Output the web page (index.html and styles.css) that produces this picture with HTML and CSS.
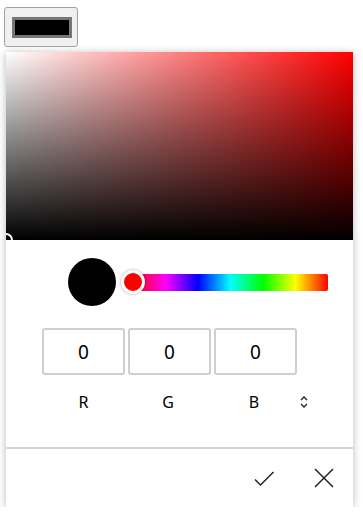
FILE: index.html
```html
<!DOCTYPE html>
<html>
<head>
<meta charset="utf-8">
<link rel="stylesheet" href="styles.css">
</head>
<body>
<button class="trigger"><span class="swatch"></span></button>
<div class="popup">
  <div class="sv">
    <span class="sv-handle"></span>
  </div>
  <div class="controls">
    <div class="preview"></div>
    <div class="hue">
      <span class="hue-thumb"></span>
    </div>
  </div>
  <div class="inputs">
    <div class="field">0</div>
    <div class="field">0</div>
    <div class="field">0</div>
  </div>
  <div class="labels">
    <span class="label">R</span>
    <span class="label">G</span>
    <span class="label">B</span>
    <svg class="toggle" width="8" height="14" viewBox="0 0 8 14">
      <path d="M1 5 L4 2 L7 5" fill="none" stroke="#222" stroke-width="1.3"/>
      <path d="M1 9 L4 12 L7 9" fill="none" stroke="#222" stroke-width="1.3"/>
    </svg>
  </div>
  <div class="footer">
    <svg class="ok" width="21" height="16" viewBox="0 0 21 16">
      <path d="M1 8.5 L6.5 14 L19.5 1" fill="none" stroke="#222" stroke-width="1.5"/>
    </svg>
    <svg class="cancel" width="20" height="20" viewBox="0 0 20 20">
      <path d="M1 1 L19 19 M19 1 L1 19" fill="none" stroke="#222" stroke-width="1.5"/>
    </svg>
  </div>
</div>
</body>
</html>
```
FILE: styles.css
```css
html, body {
  margin: 0;
  padding: 0;
  background: #fff;
  font-family: "Noto Sans", "Open Sans", sans-serif;
  color: #000;
}
body {
  padding: 7px 0 0 4px;
}
.trigger {
  display: block;
  box-sizing: border-box;
  width: 74px;
  height: 40px;
  margin: 0;
  padding: 0;
  border: 1px solid #a0a0a0;
  border-radius: 3px;
  background: #f0f0f0;
  position: relative;
}
.swatch {
  display: block;
  box-sizing: border-box;
  width: 60px;
  height: 21px;
  margin: 0 0 0 7px;
  background: #000;
  border: 3px solid #767676;
}
.popup {
  box-sizing: border-box;
  width: 347px;
  height: 455px;
  margin: 5px 0 0 2px;
  background: #fff;
  box-shadow: 0 1px 8px rgba(0, 0, 0, 0.28);
  display: flex;
  flex-direction: column;
}
.sv {
  height: 188px;
  position: relative;
  overflow: hidden;
  background: linear-gradient(to top, #000, rgba(0, 0, 0, 0)), linear-gradient(to right, #fff, #f00);
}
.sv-handle {
  position: absolute;
  left: -7px;
  bottom: -7px;
  width: 10px;
  height: 10px;
  border-radius: 50%;
  border: 2px solid #fff;
  box-shadow: 0 0 0 1px rgba(0, 0, 0, 0.5);
}
.controls {
  display: flex;
  align-items: center;
  padding: 18px 25px 0 62px;
}
.preview {
  width: 48px;
  height: 48px;
  border-radius: 50%;
  background: #000;
  flex: none;
}
.hue {
  position: relative;
  flex: 1;
  height: 17px;
  margin-left: 17px;
  border-radius: 2px;
  background: linear-gradient(to right, #f00, #f0f, #00f, #0ff, #0f0, #ff0, #f00);
}
.hue-thumb {
  position: absolute;
  left: -12px;
  top: -3.5px;
  box-sizing: border-box;
  width: 24px;
  height: 24px;
  border-radius: 50%;
  background: #f00;
  border: 3px solid #fff;
  box-shadow: 0 0 3px rgba(0, 0, 0, 0.35);
}
.inputs {
  display: flex;
  gap: 3px;
  padding: 22px 0 0 36px;
}
.field {
  box-sizing: border-box;
  width: 83px;
  height: 47px;
  border: 2px solid #cfcfcf;
  border-radius: 3px;
  display: flex;
  align-items: center;
  justify-content: center;
  font-size: 19px;
}
.labels {
  display: flex;
  align-items: center;
  padding: 17px 0 0 36px;
  height: 20px;
}
.label {
  width: 86px;
  text-align: center;
  font-size: 16px;
  line-height: 20px;
}
.label:first-child {
  width: 83px;
}
.toggle {
  margin-left: 3px;
}
.footer {
  margin-top: auto;
  height: 58px;
  border-top: 2px solid #d4d4d4;
  display: flex;
  align-items: center;
  justify-content: flex-end;
  padding-right: 19px;
  gap: 39px;
}
.ok {
  margin-top: 2px;
}
```
